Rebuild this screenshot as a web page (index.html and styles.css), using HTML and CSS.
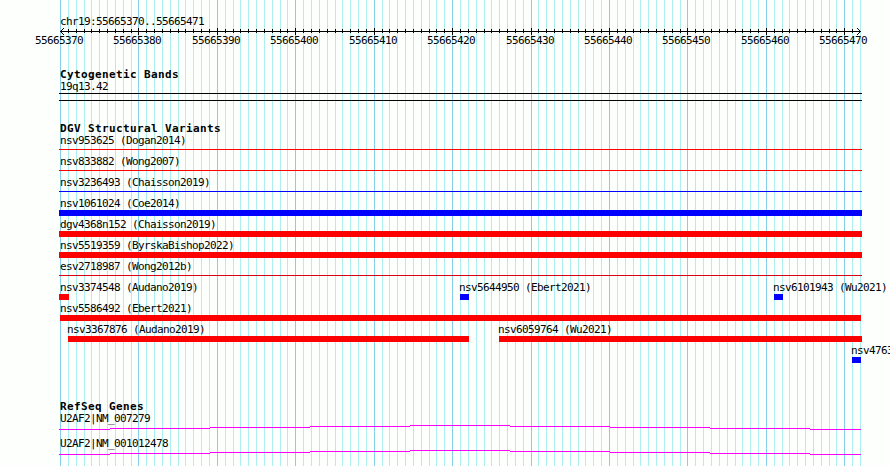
FILE: index.html
```html
<!DOCTYPE html>
<html lang="en">
<head>
<meta charset="utf-8">
<title>chr19:55665370..55665471</title>
<link rel="stylesheet" href="styles.css">
</head>
<body>
<main class="browser">
  <svg class="gridlines" width="890" height="466" shape-rendering="crispEdges" aria-hidden="true">
    <path id="minor" class="minor"/>
    <path id="major" class="major"/>
  </svg>

  <header class="ruler">
    <div class="region">chr19:55665370..55665471</div>
    <svg class="axis" width="890" height="9" shape-rendering="crispEdges" aria-hidden="true">
      <path id="ticks" class="ink" d="M60 4h801v1h-801z"/>
      <path class="ink" d="M61 3h1v1h-1zM62 2h1v1h-1zM63 1h1v1h-1zM61 5h1v1h-1zM62 6h1v1h-1zM63 7h1v1h-1zM859 3h1v1h-1zM858 2h1v1h-1zM857 1h1v1h-1zM859 5h1v1h-1zM858 6h1v1h-1zM857 7h1v1h-1z"/>
    </svg>
    <div class="scale">
      <span>55665370</span><span>55665380</span><span>55665390</span><span>55665400</span><span>55665410</span><span>55665420</span><span>55665430</span><span>55665440</span><span>55665450</span><span>55665460</span><span>55665470</span>
    </div>
  </header>

  <section class="track bands">
    <h2>Cytogenetic Bands</h2>
    <div class="label">19q13.42</div>
    <div class="band"></div>
  </section>

  <section class="track variants">
    <h2>DGV Structural Variants</h2>
    <div class="row"><div class="feature thin loss full"><span>nsv953625 (Dogan2014)</span></div></div>
    <div class="row"><div class="feature thin loss full"><span>nsv833882 (Wong2007)</span></div></div>
    <div class="row"><div class="feature thin gain full"><span>nsv3236493 (Chaisson2019)</span></div></div>
    <div class="row"><div class="feature gain full"><span>nsv1061024 (Coe2014)</span></div></div>
    <div class="row"><div class="feature loss full"><span>dgv4368n152 (Chaisson2019)</span></div></div>
    <div class="row"><div class="feature loss full"><span>nsv5519359 (ByrskaBishop2022)</span></div></div>
    <div class="row"><div class="feature thin mixed full"><span>esv2718987 (Wong2012b)</span></div></div>
    <div class="row">
      <div class="feature loss clipped" style="width:10px"><span>nsv3374548 (Audano2019)</span></div>
      <div class="feature gain" style="margin-left:391px;width:9px"><span>nsv5644950 (Ebert2021)</span></div>
      <div class="feature gain" style="margin-left:305px;width:9px"><span>nsv6101943 (Wu2021)</span></div>
    </div>
    <div class="row"><div class="feature loss aligned" style="margin-left:1px;width:801px"><span>nsv5586492 (Ebert2021)</span></div></div>
    <div class="row">
      <div class="feature loss" style="margin-left:9px;width:401px"><span>nsv3367876 (Audano2019)</span></div>
      <div class="feature loss" style="margin-left:30px;width:363px"><span>nsv6059764 (Wu2021)</span></div>
    </div>
    <div class="row"><div class="feature gain" style="margin-left:793px;width:9px"><span>nsv4763</span></div></div>
  </section>

  <section class="track genes">
    <h2>RefSeq Genes</h2>
    <div class="gene">
      <div class="label">U2AF2|NM_007279</div>
      <svg class="intron" width="803" height="5" shape-rendering="crispEdges"><path d="M0 4h51v1H0zM51 3h100v1H51zM151 2h100v1H151zM251 1h100v1H251zM351 0h100v1H351zM451 1h100v1H451zM551 2h100v1H551zM651 3h100v1H651zM751 4h51v1H751z"/></svg>
    </div>
    <div class="gene">
      <div class="label">U2AF2|NM_001012478</div>
      <svg class="intron" width="803" height="5" shape-rendering="crispEdges"><path d="M0 4h51v1H0zM51 3h100v1H51zM151 2h100v1H151zM251 1h100v1H251zM351 0h100v1H351zM451 1h100v1H451zM551 2h100v1H551zM651 3h100v1H651zM751 4h51v1H751z"/></svg>
    </div>
  </section>
</main>
<script src="grid.js"></script>
</body>
</html>
```
FILE: styles.css
```css
body {
  margin: 0;
  background: #fdfffc;
}

.browser {
  position: relative;
  width: 890px;
  height: 466px;
  overflow: hidden;
  color: #000;
  font: 11px/14px "DejaVu Sans Mono", monospace;
  letter-spacing: -0.622px;
  white-space: nowrap;
}

.gridlines {
  position: absolute;
  inset: 0;
  z-index: -1;
}

.minor { fill: #afeeee; }
.major { fill: #87ceeb; }
.ink { fill: #000; }

.ruler {
  height: 68px;
  padding-top: 15px;
  box-sizing: border-box;
}

.region {
  height: 12px;
  padding-left: 60px;
}

.axis {
  display: block;
}

.scale {
  display: grid;
  grid-template-columns: 78px 79px 78px 79px 78px 79px 78px 78px 79px 78px 60px;
  height: 12px;
  margin-top: -1px;
  padding-left: 35px;
  line-height: 12px;
}

.track {
  padding-left: 59px;
}

h2 {
  height: 12px;
  margin: 0;
  padding-left: 1px;
  font-size: 11px;
  line-height: 14px;
  font-weight: 700;
  letter-spacing: 0.378px;
}

.label {
  height: 12px;
  padding-left: 1px;
}

.bands {
  height: 54px;
}

.band {
  width: 803px;
  height: 8px;
  margin-top: 1px;
  box-sizing: border-box;
  border: solid #000;
  border-width: 1px 0;
}

.variants {
  height: 278px;
}

.row {
  display: flex;
  height: 21px;
}

.feature {
  flex: none;
  height: 21px;
  box-sizing: border-box;
}

.feature span {
  display: block;
  width: 0;
  height: 12px;
  margin-left: -1px;
}

.feature::after {
  content: "";
  display: block;
  height: 6px;
  margin-top: 1px;
  background: var(--tone);
}

.full { width: 803px; }
.full span, .clipped span { margin-left: 1px; }
.aligned span { margin-left: 0; }

.feature.thin::after {
  height: 1px;
  margin-top: 3px;
}

.loss { --tone: #ff0000; }
.gain { --tone: #0000ff; }
.mixed { --tone: #dc0012; }

.gene {
  height: 25px;
}

.intron {
  display: block;
  margin-top: 1px;
  fill: #ff00ff;
}
```
FILE: grid.js
```js
// One line per base, a stronger one every tenth base.
const START = 60, SPAN = 800, BASES = 102;
let minor = "", major = "", ticks = "";
for (let i = 0; i <= BASES; i++) {
  const x = Math.round(START + i * SPAN / BASES);
  const line = `M${x} 0h1v466h-1z`;
  if (i % 10 === 0) major += line; else minor += line;
  if (i > 0 && i < BASES) {
    ticks += i % 10 === 0 ? `M${x} 1h1v7h-1z` : `M${x} 2h1v4h-1z`;
  }
}
document.getElementById("minor").setAttribute("d", minor);
document.getElementById("major").setAttribute("d", major);
const axis = document.getElementById("ticks");
axis.setAttribute("d", axis.getAttribute("d") + ticks);
```
